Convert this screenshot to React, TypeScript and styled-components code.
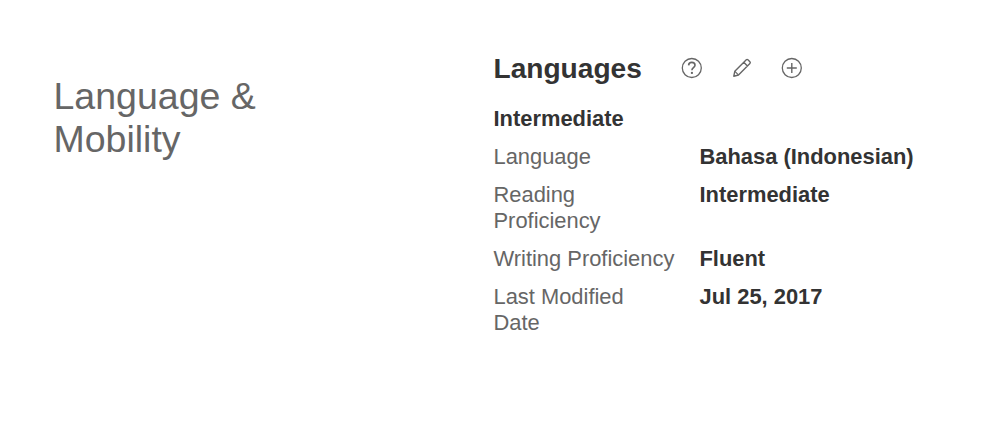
import React from "react";
import styled, { createGlobalStyle } from "styled-components";

const GlobalStyle = createGlobalStyle`
  body { margin: 0; background: #fff; font-family: "Liberation Sans", Arial, sans-serif; }
`;
const Page = styled.main`
  display: grid;
  grid-template-columns: 440px 1fr;
  box-sizing: border-box;
  min-height: 428px;
  padding: 50px 54px 0 53.5px;
  background: #fff;
`;
const SectionTitle = styled.h1`
  width: 240px;
  margin: 25px 0 0;
  font-size: 37.5px;
  line-height: 43px;
  font-weight: 400;
  color: #666;
`;
const Header = styled.header`
  display: flex;
  align-items: center;
  height: 37px;
`;
const Heading = styled.h2`
  margin: 0;
  width: 187px;
  font-size: 28.1px;
  line-height: 37px;
  font-weight: 700;
  color: #333;
`;
const Actions = styled.div`
  display: flex;
  gap: 28px;
  padding-bottom: 1px;
`;
const IconButton = styled.button`
  display: flex;
  padding: 0;
  border: 0;
  background: none;
  color: #666;
`;
const Level = styled.h3`
  margin: 19px 0 12px;
  font-size: 21.9px;
  line-height: 26px;
  font-weight: 700;
  color: #333;
`;
const Details = styled.dl`
  display: grid;
  grid-template-columns: 182px 1fr;
  column-gap: 24px;
  row-gap: 12px;
  margin: 0;
  font-size: 21.9px;
  line-height: 26px;
`;
const Label = styled.dt`
  color: #666;
`;
const Value = styled.dd`
  margin: 0;
  font-weight: 700;
  color: #333;
  white-space: nowrap;
`;

const Icon = ({ children }: { children: React.ReactNode }) => (
  <svg width="22" height="22" viewBox="0 0 22 22" fill="none" stroke="currentColor" strokeWidth="1.3">
    {children}
  </svg>
);

const rows = [
  ["Language", "Bahasa (Indonesian)"],
  ["Reading Proficiency", "Intermediate"],
  ["Writing Proficiency", "Fluent"],
  ["Last Modified Date", "Jul 25, 2017"],
];

export default function App() {
  return (
    <>
      <GlobalStyle />
      <Page>
        <SectionTitle>Language &amp; Mobility</SectionTitle>
        <section>
          <Header>
            <Heading>Languages</Heading>
            <Actions>
              <IconButton aria-label="Help">
                <Icon>
                  <circle cx="10.8" cy="11" r="9.5" />
                  <path d="M7.6 8.4C7.7 6.5 9 5.4 10.8 5.4s3.2 1.1 3.2 2.8c0 2.4-3.1 2.5-3.1 5" strokeWidth="1.6" />
                  <path d="M10.9 14.9v2" strokeWidth="2" />
                </Icon>
              </IconButton>
              <IconButton aria-label="Edit">
                <Icon>
                  <path
                    d="M2.8 19.2l1-4.9L15.3 2.8q.8-.8 1.6 0l2 2q.8.8 0 1.6L7.5 18z M12.8 5.3l3.6 3.6"
                    strokeLinejoin="round"
                    strokeWidth="1.4"
                  />
                  <path d="M3.9 14.4l3.5 3.5" strokeWidth="1.1" />
                </Icon>
              </IconButton>
              <IconButton aria-label="Add">
                <Icon>
                  <circle cx="10.8" cy="11" r="9.5" />
                  <path d="M10.8 6v10M5.8 11h10" strokeWidth="1.4" />
                </Icon>
              </IconButton>
            </Actions>
          </Header>
          <Level>Intermediate</Level>
          <Details>
            {rows.map(([label, value]) => (
              <React.Fragment key={label}>
                <Label>{label}</Label>
                <Value>{value}</Value>
              </React.Fragment>
            ))}
          </Details>
        </section>
      </Page>
    </>
  );
}
